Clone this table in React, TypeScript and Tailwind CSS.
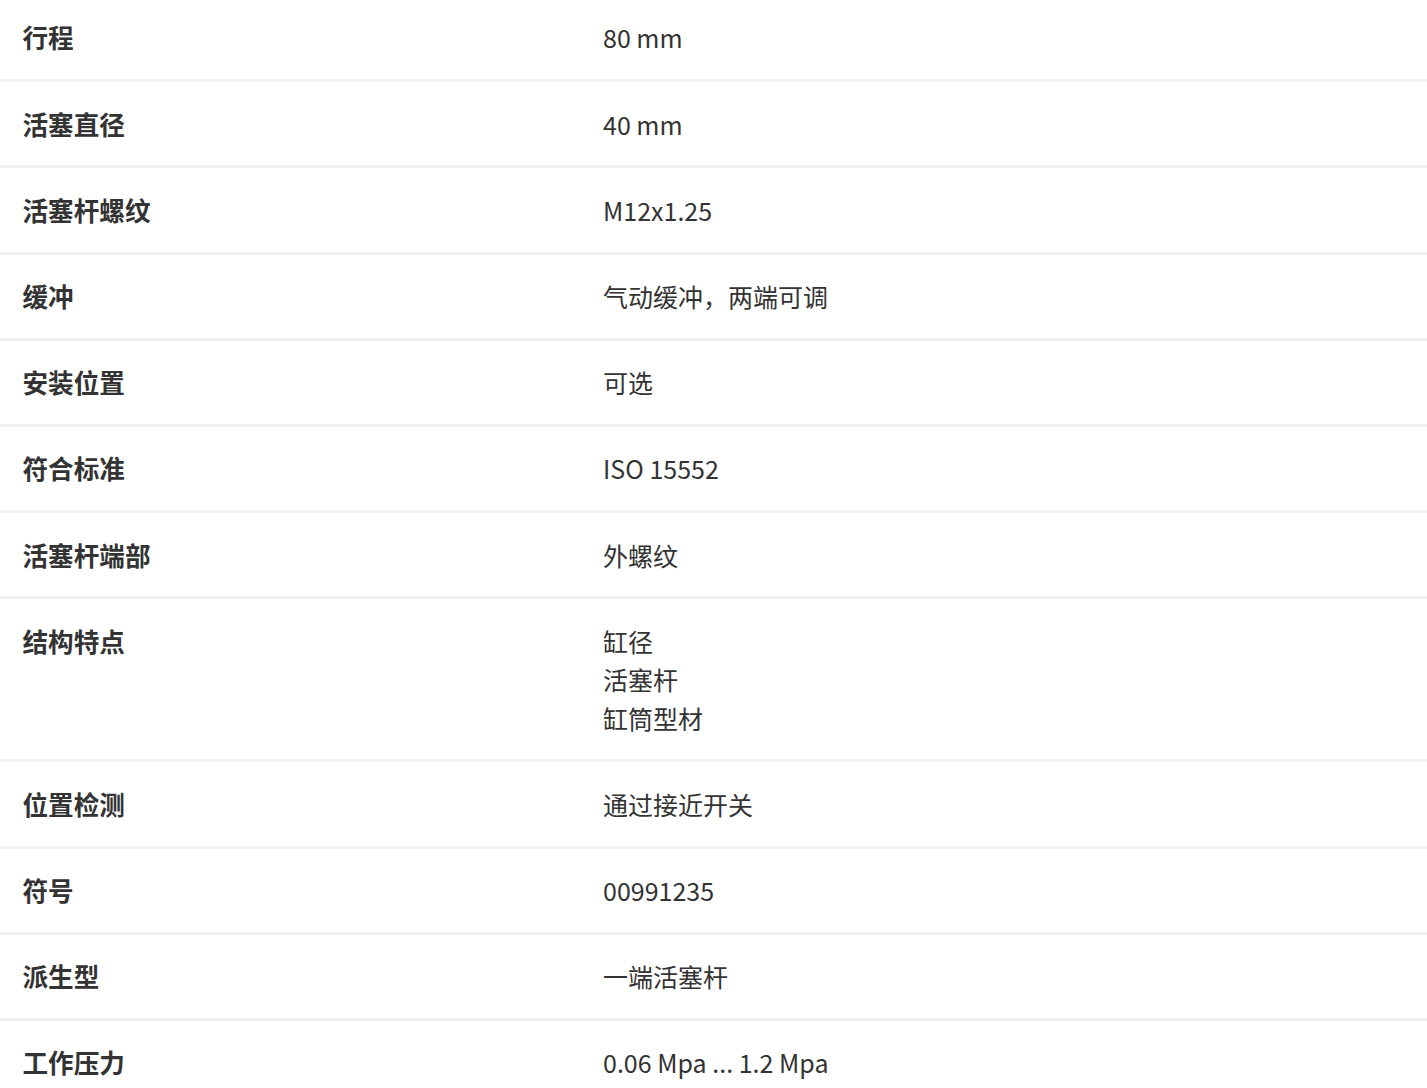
import React from 'react';

interface SpecRow {
  label: string;
  value: string[];
}

const rows: SpecRow[] = [
  { label: '行程', value: ['80 mm'] },
  { label: '活塞直径', value: ['40 mm'] },
  { label: '活塞杆螺纹', value: ['M12x1.25'] },
  { label: '缓冲', value: ['气动缓冲，两端可调'] },
  { label: '安装位置', value: ['可选'] },
  { label: '符合标准', value: ['ISO 15552'] },
  { label: '活塞杆端部', value: ['外螺纹'] },
  { label: '结构特点', value: ['缸径', '活塞杆', '缸筒型材'] },
  { label: '位置检测', value: ['通过接近开关'] },
  { label: '符号', value: ['00991235'] },
  { label: '派生型', value: ['一端活塞杆'] },
  { label: '工作压力', value: ['0.06 Mpa ... 1.2 Mpa'] },
];

export default function App() {
  return (
    <div
      className="bg-white text-[#333333] overflow-hidden h-[1088px]"
      style={{ fontFamily: '"Noto Sans CJK SC", "Noto Sans", sans-serif' }}
    >
      <dl className="-mt-[4px]">
        {rows.map((row, i) => (
          <div
            key={row.label}
            className={`flex leading-[38.4px] py-[22.4px] ${i < rows.length - 1 ? 'border-b-[3px] border-[#f0f1f3]' : ''}`}
          >
            <dt className="w-[603px] shrink-0 pl-[22.5px] text-[25.6px] font-bold">{row.label}</dt>
            <dd className="flex flex-col text-[25px]">
              {row.value.map((v) => (
                <span key={v}>{v}</span>
              ))}
            </dd>
          </div>
        ))}
      </dl>
    </div>
  );
}
